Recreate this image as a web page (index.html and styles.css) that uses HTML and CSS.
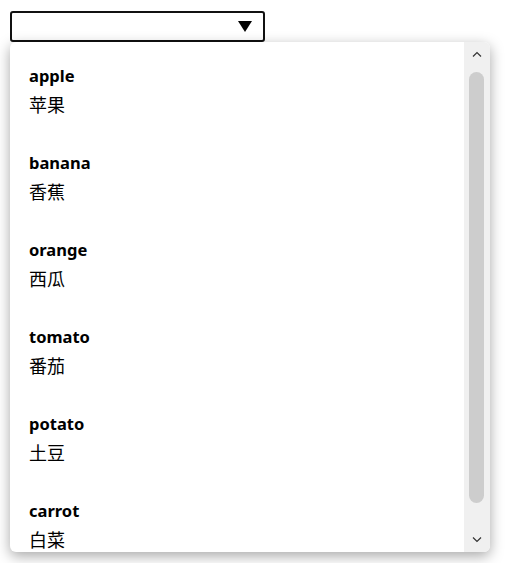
FILE: index.html
```html
<!DOCTYPE html>
<html>
<head>
<title>Picker</title>
<link rel="stylesheet" href="styles.css">
</head>
<body>

<div class="select">
  <span class="caret"></span>
</div>

<div class="dropdown">
  <ul class="options">
    <li><div class="name">apple</div><div class="zh">苹果</div></li>
    <li><div class="name">banana</div><div class="zh">香蕉</div></li>
    <li><div class="name">orange</div><div class="zh">西瓜</div></li>
    <li><div class="name">tomato</div><div class="zh">番茄</div></li>
    <li><div class="name">potato</div><div class="zh">土豆</div></li>
    <li><div class="name">carrot</div><div class="zh">白菜</div></li>
  </ul>
  <div class="scrollbar">
    <div class="arrow">
      <svg width="10" height="6" viewBox="0 0 10 6"><polyline points="1,5.5 5,1.5 9,5.5" fill="none" stroke="#333" stroke-width="1.2"/></svg>
    </div>
    <div class="track"><div class="thumb"></div></div>
    <div class="arrow">
      <svg width="10" height="6" viewBox="0 0 10 6"><polyline points="1,0.5 5,4.5 9,0.5" fill="none" stroke="#333" stroke-width="1.2"/></svg>
    </div>
  </div>
</div>

</body>
</html>
```

FILE: styles.css
```css
body {
  margin: 0;
  padding: 11px 10px;
  font-family: "Noto Sans", "Noto Sans CJK SC", sans-serif;
  font-size: 16px;
  color: #000;
  background: #fff;
}

.select {
  box-sizing: border-box;
  width: 255px;
  height: 31px;
  border: 2px solid #111;
  border-radius: 3px;
  display: flex;
  justify-content: flex-end;
  align-items: center;
  padding-right: 11px;
}

.caret {
  width: 0;
  height: 0;
  border-left: 7.5px solid transparent;
  border-right: 7.5px solid transparent;
  border-top: 11px solid #000;
}

.dropdown {
  position: relative;
  z-index: 1;
  width: 480px;
  height: 510px;
  display: flex;
  background: #fff;
  border-radius: 6px;
  overflow: hidden;
  box-shadow: 0 4px 14px rgba(0, 0, 0, 0.35);
}

.options {
  flex: 1;
  list-style: none;
  margin: 0;
  padding: 5px 0 0;
  overflow: hidden;
}

.options li {
  padding: 17px 19px;
}

.name {
  font-weight: bold;
  font-size: 16.5px;
  line-height: 24px;
}

.zh {
  margin-top: 5px;
  line-height: 24px;
  font-size: 18px;
}

.scrollbar {
  width: 26px;
  background: #f0f0f0;
  display: flex;
  flex-direction: column;
}

.arrow {
  height: 24px;
  display: flex;
  align-items: center;
  justify-content: center;
}

.track {
  flex: 1;
  padding: 6px 6px 0 5px;
}

.thumb {
  height: 431px;
  background: #cdcdcd;
  border-radius: 8px;
}
```
